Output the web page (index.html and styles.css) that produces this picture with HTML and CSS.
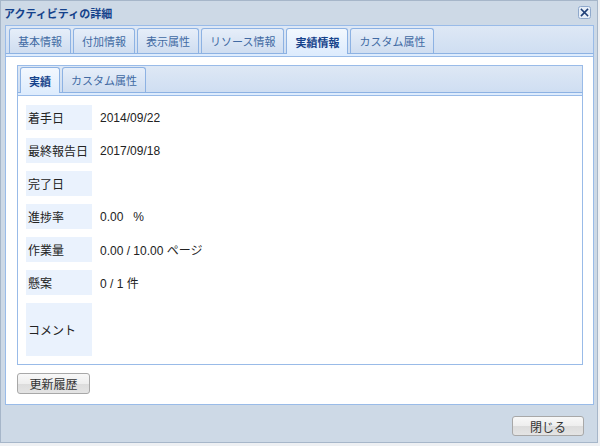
FILE: index.html
```html
<!DOCTYPE html>
<html lang="ja">
<head>
<meta charset="utf-8">
<title>アクティビティの詳細</title>
<link rel="stylesheet" href="styles.css">
</head>
<body>
<div class="window">
  <div class="titlebar">
    <span class="title">アクティビティの詳細</span>
    <span class="close-x" aria-label="close">
      <svg width="13" height="13" viewBox="0 0 13 13">
        <rect x="0.5" y="0.5" width="12" height="12" rx="2" ry="2" fill="#e6eef8" stroke="#8fa9cc"/>
        <path d="M3.5 3.5 L9.5 9.5 M9.5 3.5 L3.5 9.5" stroke="#1e3f77" stroke-width="1.6" stroke-linecap="square"/>
      </svg>
    </span>
  </div>

  <div class="tabpanel outer">
    <div class="tabstrip">
      <div class="tab">基本情報</div>
      <div class="tab">付加情報</div>
      <div class="tab">表示属性</div>
      <div class="tab">リソース情報</div>
      <div class="tab active">実績情報</div>
      <div class="tab">カスタム属性</div>
    </div>
    <div class="spacer"></div>
    <div class="tabbody outer-body">
      <div class="tabpanel inner">
        <div class="tabstrip inner-strip">
          <div class="tab active">実績</div>
          <div class="tab">カスタム属性</div>
        </div>
        <div class="spacer"></div>
        <div class="tabbody inner-body">
          <div class="row"><div class="label">着手日</div><div class="value">2014/09/22</div></div>
          <div class="row"><div class="label">最終報告日</div><div class="value">2017/09/18</div></div>
          <div class="row"><div class="label">完了日</div><div class="value"></div></div>
          <div class="row"><div class="label">進捗率</div><div class="value">0.00&nbsp;&nbsp;&nbsp;%</div></div>
          <div class="row"><div class="label">作業量</div><div class="value">0.00 / 10.00 ページ</div></div>
          <div class="row"><div class="label">懸案</div><div class="value">0 / 1 件</div></div>
          <div class="row tall"><div class="label">コメント</div><div class="value"></div></div>
        </div>
      </div>
      <button class="btn history">更新履歴</button>
    </div>
  </div>

  <div class="footer">
    <button class="btn closebtn">閉じる</button>
  </div>
</div>
</body>
</html>
```

FILE: styles.css
```css
* { box-sizing: border-box; }

html, body {
  margin: 0;
  padding: 0;
}

body {
  background: #eef0f3;
  font-family: "Liberation Sans", "Noto Sans CJK JP", sans-serif;
  font-size: 12px;
  color: #222;
}

.window {
  width: 598px;
  height: 443px;
  background: #cdd9e6;
  border: 1px solid #a6b6c9;
  padding: 0 3px 0 4px;
  display: flex;
  flex-direction: column;
}

.titlebar {
  height: 24px;
  display: flex;
  align-items: center;
  justify-content: space-between;
  padding: 0 3px 0 0;
  margin-left: -1px;
}

.title {
  font-size: 11px;
  font-weight: bold;
  color: #15428b;
}

.close-x {
  display: flex;
  width: 13px;
  height: 13px;
  margin-top: -1px;
}

.tabpanel {
  display: flex;
  flex-direction: column;
}

.tabstrip {
  display: flex;
  align-items: flex-end;
  gap: 2px;
  border: 1px solid #99bbe8;
  border-bottom: none;
  background: linear-gradient(#dee8f5, #cfdef2);
  padding: 2px 3px 0 3px;
}

.inner-strip {
  padding: 1px 2px 0 2px;
}

.tab {
  height: 25px;
  padding: 0 8px;
  border: 1px solid #8db2e3;
  border-bottom: none;
  border-radius: 3px 3px 0 0;
  background: linear-gradient(#e6eef9, #cfddf0);
  color: #416aa3;
  font-size: 11px;
  display: flex;
  align-items: center;
  justify-content: center;
  white-space: nowrap;
}

.tab.active {
  background: linear-gradient(#f3f8fe, #deecfd);
  color: #15428b;
  font-weight: bold;
  height: 26px;
  margin-bottom: -1px;
  position: relative;
  z-index: 1;
}

.spacer {
  height: 4px;
  border: 1px solid #99bbe8;
  border-top-color: #8db2e3;
  background: #deecfd;
}

.tabbody {
  background: #fff;
  border: 1px solid #99bbe8;
  border-top: none;
}

.outer-body {
  padding: 8px 10px 10px 11px;
  display: flex;
  flex-direction: column;
  align-items: flex-start;
}

.inner {
  align-self: stretch;
}

.inner-body {
  padding: 9px 8px 8px 8px;
  display: flex;
  flex-direction: column;
  gap: 8px;
}

.row {
  display: flex;
  height: 25px;
  align-items: stretch;
}

.row.tall {
  height: 53px;
}

.label {
  width: 66px;
  background: #eaf2fd;
  padding-left: 2px;
  display: flex;
  align-items: center;
  color: #222;
  white-space: nowrap;
}

.value {
  padding-left: 8px;
  display: flex;
  align-items: center;
  color: #222;
  white-space: pre;
}

.btn {
  font-family: "Liberation Sans", "Noto Sans CJK JP", sans-serif;
  font-size: 12px;
  color: #333;
  height: 21px;
  border: 1px solid #a8a8a8;
  border-radius: 3px;
  background: linear-gradient(#f8f8f8 0%, #eeeeee 50%, #dcdcdc 51%, #e4e4e4 100%);
  padding: 0;
  margin: 0;
  display: flex;
  align-items: center;
  justify-content: center;
}

.history {
  width: 73px;
  margin-top: 8px;
}

.footer {
  flex: 1;
  display: flex;
  justify-content: flex-end;
  align-items: flex-start;
  padding: 11px 10px 0 0;
}

.closebtn {
  width: 72px;
  height: 20px;
}
```
